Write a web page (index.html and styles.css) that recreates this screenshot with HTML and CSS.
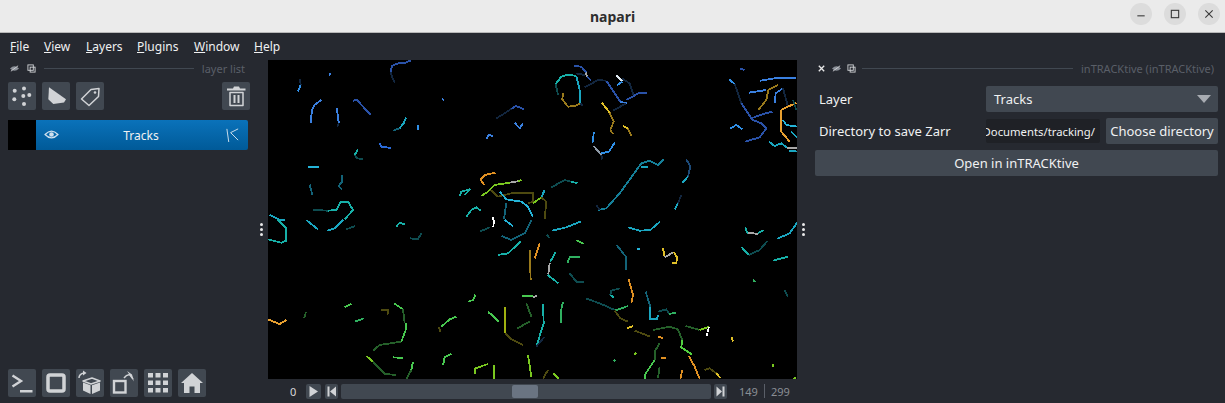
FILE: index.html
```html
<!DOCTYPE html>
<html lang="en">
<head>
<meta charset="utf-8">
<title>napari</title>
<link rel="stylesheet" href="styles.css">
</head>
<body>
<div class="app">
  <header class="titlebar">
    <div class="title">napari</div>
    <div class="winbtns">
      <div class="winbtn"><svg viewBox="0 0 24 24" width="22" height="22"><path class="wi" d="M8 14h8"/></svg></div>
      <div class="winbtn"><svg viewBox="0 0 24 24" width="22" height="22"><rect class="wi" x="8" y="8" width="8" height="8"/></svg></div>
      <div class="winbtn"><svg viewBox="0 0 24 24" width="22" height="22"><path class="wi" d="M8 8l8 8M16 8l-8 8"/></svg></div>
    </div>
  </header>
  <nav class="menubar">
    <span class="mi m1"><u>F</u>ile</span>
    <span class="mi m2"><u>V</u>iew</span>
    <span class="mi m3"><u>L</u>ayers</span>
    <span class="mi m4"><u>P</u>lugins</span>
    <span class="mi m5"><u>W</u>indow</span>
    <span class="mi m6"><u>H</u>elp</span>
  </nav>
  <main class="workspace">
    <aside class="left">
      <div class="dockhead leftdockhead">
        <svg class="mini" viewBox="0 0 10 10"><path class="minif" d="M0 5q5-5 10 0q-5 5-10 0z"/><path class="minil" d="M1 8L9 2"/></svg>
        <svg class="mini" viewBox="0 0 10 10"><rect class="minil" x="1" y="1" width="6" height="6"/><rect class="minil" x="3.500" y="3.500" width="5.500" height="5.500"/></svg>
        <span class="rule"></span>
        <span class="dockname">layer list</span>
      </div>
      <div class="toolrow">
        <div class="btn"><svg viewBox="0 0 28 28"><g class="ic"><circle cx="16" cy="6.500" r="2"/><circle cx="6.700" cy="8.800" r="2"/><circle cx="21.300" cy="13" r="2"/><circle cx="15.300" cy="14" r="2"/><circle cx="6.300" cy="17.300" r="2"/><circle cx="16" cy="22" r="2"/></g></svg></div>
        <div class="btn"><svg viewBox="0 0 28 28"><path class="ic" d="M7 5.300L24 17.300L22 20.600L11.300 22L6.300 17.300z"/></svg></div>
        <div class="btn"><svg viewBox="0 0 28 28"><path class="ico" d="M5.500 17L15 7.500L23 6.500L22.500 14.500L13 23.500z"/><circle class="ic" cx="19" cy="10.500" r="1.300"/></svg></div>
        <div class="grow"></div>
        <div class="btn"><svg viewBox="0 0 28 28"><path class="ic" d="M5 6.500h6l1-2h5l1 2h5.500v2H5z"/><path class="ico" d="M8 10.500h13v13H8z"/><path class="ic" d="M11.500 13h2v8h-2zM15.500 13h2v8h-2z"/></svg></div>
      </div>
      <div class="layerrow">
        <div class="thumb"></div>
        <div class="layerbody">
          <svg class="eye" viewBox="0 0 16 12"><path class="eyeo" d="M1 6q7-7.500 14 0q-7 7.500-14 0z"/><circle class="eyef" cx="8" cy="6" r="2.500"/></svg>
          <span class="layername">Tracks</span>
          <svg class="trk" viewBox="0 0 16 16"><path class="trkl" d="M2 2l2 14M14 2L6 6l8 8"/></svg>
        </div>
      </div>
      <div class="grow"></div>
      <div class="toolrow bottomrow">
        <div class="btn"><svg viewBox="0 0 28 28"><path class="ico2" d="M4.500 6.500L13 12L4.500 17.500"/><path class="ic" d="M12 21h12.500v2.500H12z"/></svg></div>
        <div class="btn"><svg viewBox="0 0 28 28"><rect class="ico3" x="6" y="6" width="16" height="16" rx="2"/></svg></div>
        <div class="btn"><svg viewBox="0 0 28 28"><path class="ico" d="M7 12l9-3 8 3-9 3z"/><path class="ic" d="M7 13.500l7.500 2.800V25L7 21.500zM16 16.300l8-2.800v8L16 25z"/><path class="ico" d="M3 9q0-4 5-5"/><path class="ic" d="M7 1.500l3.500 2.500L7 6.500z"/></svg></div>
        <div class="btn"><svg viewBox="0 0 28 28"><rect class="ico2" x="4" y="12" width="11.500" height="11.500"/><path class="ico" d="M14 9q3-4 6-3l3 4"/><path class="ic" d="M17 2l5 3.500 2 7z"/></svg></div>
        <div class="btn"><svg viewBox="0 0 28 28"><g class="ic"><rect x="4" y="4" width="5" height="4.500"/><rect x="11.500" y="4" width="5" height="4.500"/><rect x="19" y="4" width="5" height="4.500"/><rect x="4" y="11.500" width="5" height="4.500"/><rect x="11.500" y="11.500" width="5" height="4.500"/><rect x="19" y="11.500" width="5" height="4.500"/><rect x="4" y="19" width="5" height="4.500"/><rect x="11.500" y="19" width="5" height="4.500"/><rect x="19" y="19" width="5" height="4.500"/></g></svg></div>
        <div class="btn"><svg viewBox="0 0 28 28"><path class="ic" d="M14 4L25 14h-3v10h-5.500v-6.500h-5V24H6V14H3z"/></svg></div>
      </div>
    </aside>
    <div class="grip"><i></i><i></i><i></i></div>
    <section class="center">
      <svg class="canvas" viewBox="0 0 529 319" width="529" height="319">
        <g transform="scale(.33333)">
          <!-- upper left -->
          <g class="t">
            <polyline class="dk" points="368,35 372,50 380,68"/>
            <polyline class="nv" points="368,35 372,18 390,10 412,8 428,2"/>
            <polyline class="dk" points="96,58 98,75"/>
            <polyline class="b1" points="98,75 90,95"/>
            <polyline class="b2" points="183,47 187,39"/>
            <polyline class="b2" points="128,188 132,150 140,135 160,120"/>
            <polyline class="b2" points="207,145 210,175 213,190"/>
            <polyline class="dk" points="213,190 208,200"/>
            <polyline class="nv" points="255,122 268,120 285,140 308,165"/>
            <polyline class="b2" points="522,118 528,119"/>
            <polyline class="c1" points="414,172 408,188 395,205"/>
            <polyline class="tl2" points="395,205 375,212"/>
            <polyline class="b1" points="450,194 450,210"/>
            <polyline class="b3" points="335,250 340,260 368,264"/>
            <polyline class="c2" points="270,268 260,285"/>
            <polyline class="tl3" points="260,285 268,295 285,298"/>
            <polyline class="c3" points="120,320 152,322"/>
            <polyline class="tl2" points="222,346 222,365 212,378 222,388"/>
            <polyline class="tl2" points="125,374 130,392 132,406"/>
            <polyline class="dk" points="685,175 710,160 730,146"/>
            <polyline class="nv" points="730,146 745,138 768,148"/>
            <polyline class="b2" points="740,188 755,205 765,190"/>
            <polyline class="b2" points="655,238 662,225 675,228"/>
            <polyline class="or" points="682,338 650,345 638,358 648,375"/>
            <polyline class="gn" points="640,408 660,395 680,375 725,368"/>
            <polyline class="gy" points="725,368 750,364"/>
            <polyline class="gn" points="750,364 760,360"/>
            <polyline class="ol" points="668,390 690,410 730,400 795,398 795,425 780,430"/>
            <polyline class="c3" points="695,395 715,418 760,425 780,440 795,470"/>
            <polyline class="tl2" points="715,430 708,478"/>
            <polyline class="c2" points="575,408 580,395 605,388 590,405"/>
            <polyline class="c2" points="595,470 610,450 625,442 638,452"/>
            <polyline class="tl3" points="135,450 180,452"/>
            <polyline class="c2" points="180,452 205,450 218,425 240,425 255,450 230,478"/>
            <polyline class="c1" points="5,465 35,480 50,480"/>
            <polyline class="wh" points="675,472 675,480"/>
          </g>
          <!-- upper right -->
          <g class="t" transform="translate(795,0)">
            <polyline class="nv" points="122,18 145,20 160,38"/>
            <polyline class="gy" points="158,38 162,50"/>
            <polyline class="nv" points="162,50 175,62"/>
            <polyline class="dk" points="128,40 155,45"/>
            <polyline class="c2" points="68,72 85,50 105,44 130,48"/>
            <polyline class="tl3" points="68,72 75,105"/>
            <polyline class="c1" points="130,48 140,90 142,130"/>
            <polyline class="yd" points="90,98 88,118 105,140 125,138 142,130"/>
            <polyline class="dk" points="142,130 150,138"/>
            <polyline class="dk" points="155,82 195,60 220,62"/>
            <polyline class="nv" points="220,62 245,100 262,125"/>
            <polyline class="b2" points="262,125 282,130"/>
            <polyline class="wh2" points="250,45 268,65"/>
            <polyline class="b1" points="268,65 252,76"/>
            <polyline class="dk" points="268,56 290,70 302,108"/>
            <polyline class="nv" points="280,120 320,98 342,98"/>
            <polyline class="dk" points="240,152 280,130"/>
            <polyline class="yl" points="206,128 230,158"/>
            <polyline class="yd" points="230,158 242,185 232,210 240,222"/>
            <polyline class="yl" points="270,198 285,205"/>
            <polyline class="yd" points="285,205 295,228"/>
            <polyline class="b1" points="183,215 178,250"/>
            <polyline class="gy2" points="182,258 205,285"/>
            <polyline class="b1" points="205,280 228,275 246,247"/>
            <polyline class="dk" points="205,285 208,298"/>
            <polyline class="tl1" points="195,450 220,445 260,400 300,345 325,310 350,302 375,315 392,298"/>
            <polyline class="c1" points="325,320 345,322"/>
            <polyline class="nv3" points="460,298 472,320 465,350"/>
            <polyline class="c1" points="465,350 448,368"/>
            <polyline class="dk" points="445,405 435,430"/>
            <polyline class="c1" points="435,430 425,448"/>
            <polyline class="dk" points="190,435 200,450"/>
            <polyline class="tl3" points="55,382 95,360 115,365"/>
            <polyline class="c2" points="115,365 133,370"/>
            <polyline class="c1" points="25,412 35,390"/>
            <polyline class="gn" points="0,430 25,412"/>
            <polyline class="ol" points="25,412 40,425 35,478"/>
            <polyline class="nv" points="620,25 635,30"/>
            <polyline class="b1" points="588,58 605,72"/>
            <polyline class="dk" points="605,72 625,130"/>
            <polyline class="nv" points="625,130 655,175 690,162 718,155"/>
            <polyline class="b2" points="682,62 730,54 790,54"/>
            <polyline class="b2" points="648,98 700,90"/>
            <polyline class="yd" points="676,150 700,120 706,90 735,75"/>
            <polyline class="b2" points="726,128 728,100 750,85"/>
            <polyline class="dk" points="750,85 765,140"/>
            <polyline class="b1" points="592,205 610,195 628,208"/>
            <polyline class="nv" points="636,245 680,232 700,205 685,190 655,178"/>
            <polyline class="or2" points="790,128 745,150 745,215 770,245"/>
            <polyline class="c3" points="750,180 760,195 795,200"/>
            <polyline class="c1" points="708,245 725,258 745,250 765,265"/>
            <polyline class="gy" points="762,265 795,265"/>
            <polyline class="c1" points="768,272 795,275"/>
            <polyline class="c1" points="775,215 795,235"/>
            <polyline class="tl3" points="780,120 790,150"/>
          </g>
          <!-- lower left -->
          <g class="t" transform="translate(0,480)">
            <polyline class="c2" points="30,0 55,25 55,62 40,68 0,58"/>
            <polyline class="c1" points="115,0 150,28"/>
            <polyline class="c1" points="178,32 200,25 225,0"/>
            <polyline class="tl3" points="235,28 262,18"/>
            <polyline class="c2" points="385,20 395,8 412,14"/>
            <polyline class="tl3" points="425,55 450,58 460,40"/>
            <polyline class="tl3" points="635,35 665,22"/>
            <polyline class="wh" points="678,0 676,20"/>
            <polyline class="c3" points="710,0 735,18"/>
            <polyline class="tl2" points="700,48 730,60 770,40 790,0"/>
            <polyline class="c2" points="690,105 720,100 758,65"/>
            <polyline class="yd" points="785,90 788,180"/>
            <polyline class="or2" points="0,298 35,312 55,300"/>
            <polyline class="gd" points="108,295 114,276"/>
            <polyline class="g2" points="230,262 250,252"/>
            <polyline class="ol" points="338,270 362,270 358,285"/>
            <polyline class="g3" points="260,305 288,295"/>
            <polyline class="g2" points="378,250 405,268"/>
            <polyline class="gd" points="405,268 410,310"/>
            <polyline class="g2" points="415,310 415,325 400,365"/>
            <polyline class="gd" points="400,365 335,375 315,392"/>
            <polyline class="gn" points="295,408 315,425"/>
            <polyline class="gd" points="315,425 350,462 385,465"/>
            <polyline class="g2" points="375,412 405,414"/>
            <polyline class="g2" points="435,425 430,450"/>
            <polyline class="gd" points="430,450 415,478"/>
            <polyline class="g2" points="600,245 615,240 622,224"/>
            <polyline class="g2" points="520,320 545,298 565,290"/>
            <polyline class="ol" points="512,322 518,336"/>
            <polyline class="g2" points="660,276 672,285 692,305"/>
            <polyline class="gd" points="748,325 785,305"/>
            <polyline class="g2" points="762,228 795,228"/>
            <polyline class="gd" points="775,250 790,290"/>
            <polyline class="yg" points="711,262 711,340"/>
            <polyline class="ol" points="711,340 730,358 765,375"/>
            <polyline class="g2" points="525,436 530,412 550,402"/>
            <polyline class="gn" points="620,462 622,445 660,432"/>
            <polyline class="gn" points="678,436 678,478"/>
            <polyline class="gn" points="780,404 790,470"/>
          </g>
          <!-- lower right -->
          <g class="t" transform="translate(795,480)">
            <polyline class="c1" points="58,32 100,22 145,4"/>
            <polyline class="c1" points="285,22 320,32 352,30 382,4"/>
            <polyline class="tl3" points="42,44 50,55"/>
            <polyline class="or" points="20,70 5,115"/>
            <polyline class="g2" points="130,60 152,72"/>
            <polyline class="tl2" points="250,74 280,112 278,150"/>
            <polyline class="c3" points="312,88 322,86"/>
            <polyline class="yl" points="390,85 395,110"/>
            <polyline class="gy" points="395,112 422,96"/>
            <polyline class="yl" points="422,96 432,112 430,128 418,130"/>
            <polyline class="c2" points="68,96 52,125"/>
            <polyline class="gy" points="50,130 46,162"/>
            <polyline class="c2" points="44,165 76,190"/>
            <polyline class="g3" points="104,128 110,112 142,112"/>
            <polyline class="tl3" points="110,160 130,185 152,186"/>
            <polyline class="c2" points="636,22 645,42"/>
            <polyline class="gy" points="645,38 675,42"/>
            <polyline class="c2" points="675,40 692,30"/>
            <polyline class="c1" points="733,56 770,40 795,4"/>
            <polyline class="c2" points="626,82 648,105"/>
            <polyline class="tl3" points="648,105 680,90 704,62"/>
            <polyline class="c2" points="720,122 765,110"/>
            <polyline class="g3" points="660,180 668,186"/>
            <polyline class="tl3" points="755,210 765,230"/>
            <polyline class="or" points="287,178 300,225 295,248"/>
            <polyline class="tl3" points="260,205 235,212 232,225"/>
            <polyline class="c2" points="232,225 242,232"/>
            <polyline class="c2" points="30,252 32,310 10,380"/>
            <polyline class="dk" points="10,380 35,350"/>
            <polyline class="gy" points="0,232 12,226"/>
            <polyline class="g3" points="90,245 84,272 85,310"/>
            <polyline class="tl3" points="158,235 200,250 245,270"/>
            <polyline class="g3" points="245,272 285,258"/>
            <polyline class="ol" points="245,272 262,295 285,305"/>
            <polyline class="yl" points="282,325 300,318"/>
            <polyline class="tl2" points="338,215 352,260"/>
            <polyline class="c1" points="352,260 352,298 372,298 375,285"/>
            <polyline class="tl3" points="375,275 400,268 408,282"/>
            <polyline class="g3" points="408,282 430,278"/>
            <polyline class="ol" points="305,332 352,350"/>
            <polyline class="or" points="376,350 390,354"/>
            <polyline class="gd" points="360,330 410,320 435,328 448,360"/>
            <polyline class="gn2" points="448,360 445,382 478,404"/>
            <polyline class="gd" points="458,318 500,330"/>
            <polyline class="gn" points="500,330 528,320"/>
            <polyline class="wh" points="528,320 524,335"/>
            <polyline class="wh" points="522,340 522,348"/>
            <polyline class="yl" points="595,350 600,365"/>
            <polyline class="or" points="384,414 398,414"/>
            <polyline class="gn" points="305,404 310,398"/>
            <polyline class="g3" points="242,424 246,420"/>
            <polyline class="gd" points="380,370 365,395 365,420"/>
            <polyline class="g2" points="365,420 335,465 335,478"/>
            <polyline class="gd" points="380,440 375,475"/>
            <polyline class="or" points="468,408 485,440 500,476"/>
            <polyline class="or" points="448,450 442,476"/>
            <polyline class="gn" points="720,432 720,442"/>
            <polyline class="ol" points="515,450 530,445 550,460"/>
            <polyline class="yl" points="550,460 562,474"/>
            <polyline class="ol" points="30,476 45,450"/>
            <polyline class="gn" points="62,460 78,478"/>
            <polyline class="gn" points="788,472 782,478"/>
          </g>
        </g>
      </svg>
      <div class="slider">
        <span class="frame">0</span>
        <div class="sbtn sbtn1"><svg viewBox="0 0 15 15"><path class="ic" d="M3.500 2L12 7.500L3.500 13z"/></svg></div>
        <div class="sbtn sbtn2"><svg viewBox="0 0 13 15"><path class="ic" d="M2.500 2.500h2v10h-2zM11 2.500v10L5 7.500z"/></svg></div>
        <div class="track"><div class="handle"></div></div>
        <div class="sbtn sbtn3"><svg viewBox="0 0 13 15"><path class="ic" d="M2.500 2.500v10L8 7.500zM8.500 2.500h2v10h-2z"/></svg></div>
        <span class="cur">149</span>
        <span class="sep"></span>
        <span class="tot">299</span>
      </div>
    </section>
    <div class="grip"><i></i><i></i><i></i></div>
    <aside class="right">
      <div class="dockhead righthead">
        <svg class="mini" viewBox="0 0 10 10"><path class="minix" d="M2 2l6 6M8 2l-6 6"/></svg>
        <svg class="mini" viewBox="0 0 10 10"><path class="minif" d="M0 5q5-5 10 0q-5 5-10 0z"/><path class="minil" d="M1 8L9 2"/></svg>
        <svg class="mini" viewBox="0 0 10 10"><rect class="minil" x="1" y="1" width="6" height="6"/><rect class="minil" x="3.500" y="3.500" width="5.500" height="5.500"/></svg>
        <span class="rule"></span>
        <span class="dockname">inTRACKtive (inTRACKtive)</span>
      </div>
      <div class="formrow row1">
        <span class="lbl">Layer</span>
        <div class="combo"><span>Tracks</span><span class="tri"></span></div>
      </div>
      <div class="formrow row2">
        <span class="lbl">Directory to save Zarr</span>
        <div class="dirfield"><div class="dirinput"><span>Documents/tracking/</span></div><div class="pbtn choose">Choose directory</div></div>
      </div>
      <div class="pbtn open">Open in inTRACKtive</div>
    </aside>
  </main>
</div>
</body>
</html>
```
FILE: styles.css
```css
* { box-sizing: border-box; }
html, body { margin: 0; padding: 0; width: 1225px; height: 403px; overflow: hidden; }
body { font-family: "Noto Sans", sans-serif; font-size: 13px; color: #f0f1f2; background: #262930; }
.app { display: flex; flex-direction: column; width: 1225px; height: 403px; }

.titlebar { flex: 0 0 33px; display: flex; align-items: center; justify-content: center; position: relative; background: #ebebeb; border-bottom: 1px solid #b8b8b8; }
.title { font-family: "Noto Sans", sans-serif; font-weight: 700; font-size: 14px; color: #2e2e2e; }
.winbtns { position: absolute; right: 5px; top: 3px; display: flex; gap: 12px; }
.winbtn { width: 22px; height: 22px; border-radius: 50%; background: #dcdcdc; }
.winbtn svg { display: block; }
.wi { fill: none; stroke: #3a3a3a; stroke-width: 1.200; }

.menubar { flex: 0 0 27px; display: flex; align-items: center; padding-left: 10px; font-size: 12px; color: #f0f1f2; }
.mi { display: block; }
.m1 { width: 34px; } .m2 { width: 42px; } .m3 { width: 51px; } .m4 { width: 57px; } .m5 { width: 60px; }

.workspace { flex: 1; display: flex; min-height: 0; }
.left { flex: 0 0 255px; display: flex; flex-direction: column; padding: 0 5px 6px 8px; }
.grow { flex: 1; }
.dockhead { display: flex; align-items: center; height: 16px; font-size: 11px; color: #5a5f68; }
.leftdockhead { padding-left: 2px; padding-right: 5px; }
.mini { width: 9px; height: 9px; margin-right: 8px; flex: none; }
.minif { fill: #8b9098; }
.minil { fill: none; stroke: #d1d3d6; stroke-width: 1; }
.minix { fill: none; stroke: #e8e8e8; stroke-width: 1.500; }
.rule { flex: 1; height: 1px; background: #414851; margin: 0 8px 0 0; }
.dockname { white-space: nowrap; }

.toolrow { display: flex; gap: 6px; margin-top: 6px; }
.btn { width: 28px; height: 28px; background: #414851; border-radius: 2px; flex: none; }
.btn svg { display: block; width: 28px; height: 28px; }
.ic { fill: #d1d3d6; }
.ico { fill: none; stroke: #d1d3d6; stroke-width: 1.500; stroke-linejoin: round; }
.ico2 { fill: none; stroke: #d1d3d6; stroke-width: 2.400; }
.ico3 { fill: none; stroke: #d1d3d6; stroke-width: 3.500; }

.layerrow { display: flex; height: 30px; margin-top: 10px; width: 240px; }
.thumb { width: 28px; background: #000; }
.layerbody { flex: 1; display: flex; align-items: center; justify-content: center; position: relative; background: linear-gradient(#0a72ba, #005a98); border-radius: 0 2px 2px 0; font-size: 12px; }
.layername { margin-right: 2px; }
.eye { position: absolute; left: 8px; top: 9px; width: 15px; height: 11px; }
.eyeo { fill: none; stroke: #cfe0ee; stroke-width: 1.400; }
.eyef { fill: #cfe0ee; }
.trk { position: absolute; right: 8px; top: 7px; width: 15px; height: 15px; }
.trkl { fill: none; stroke: #d5e3ee; stroke-width: 1; }
.bottomrow { margin-top: 0; }

.grip { flex: 0 0 13px; display: flex; flex-direction: column; align-items: center; gap: 2px; padding-top: 163px; }
.grip i { display: block; width: 3px; height: 3px; border-radius: 50%; background: #e8e8e8; }

.center { flex: 0 0 529px; display: flex; flex-direction: column; }
.canvas { display: block; flex: none; background: #000; }
.t polyline { fill: none; stroke-width: 5.500; shape-rendering: crispEdges; stroke-linejoin: round; }
.dk { stroke: #12263f; } .nv { stroke: #2a52a8; } .nv3 { stroke: #1c4a78; }
.b1 { stroke: #3090e8; } .b2 { stroke: #3a80e0; } .b3 { stroke: #2a6ad8; }
.c1 { stroke: #1aa6c0; } .c2 { stroke: #17b0a8; } .c3 { stroke: #25b4d8; }
.tl1 { stroke: #157f98; } .tl2 { stroke: #136378; } .tl3 { stroke: #0e4c50; }
.or { stroke: #e09022; } .or2 { stroke: #e8a030; } .yl { stroke: #e0c028; } .yd { stroke: #9a7a1c; }
.ol { stroke: #4e4a10; } .gy { stroke: #a8a8a8; } .gy2 { stroke: #8f9aa8; }
.wh { stroke: #fff; } .wh2 { stroke: #dfe8f0; }
.gn { stroke: #7ac820; } .gn2 { stroke: #52d040; } .g2 { stroke: #48c850; } .g3 { stroke: #30b060; } .gd { stroke: #25602a; } .yg { stroke: #a0b010; }

.slider { flex: 1; display: flex; align-items: center; font-size: 11px; color: #d8d9db; }
.frame { width: 38px; padding-left: 22px; flex: none; }
.sbtn { flex: none; height: 15px; background: #414851; border-radius: 2px; }
.sbtn svg { display: block; width: 100%; height: 100%; }
.sbtn1 { width: 15px; }
.sbtn2 { width: 13px; margin-left: 4px; }
.sbtn3 { width: 13px; margin-left: 3px; }
.track { flex: none; width: 370px; height: 15px; margin-left: 3px; background: #414851; border-radius: 2px; display: flex; align-items: center; padding-left: 171px; }
.handle { width: 26px; height: 13px; background: #6a7482; border-radius: 2px; }
.cur { margin-left: 12px; color: #8a8e95; }
.sep { width: 1px; height: 14px; background: #5a5f68; margin: 0 6px; }
.tot { color: #8a8e95; }

.right { flex: 1; display: flex; flex-direction: column; padding-right: 7px; padding-left: 5px; min-width: 0; }
.righthead { padding-left: 2px; padding-right: 4px; }
.righthead .mini { margin-right: 6px; }
.formrow { display: flex; align-items: center; padding-left: 4px; }
.row1 { height: 26px; margin-top: 10px; }
.row2 { height: 26px; margin-top: 6px; }
.lbl { width: 167px; flex: none; }
.combo { flex: 1; height: 26px; background: #414851; border-radius: 2px; display: flex; align-items: center; justify-content: space-between; padding: 0 7px 0 8px; }
.tri { width: 0; height: 0; border-left: 7px solid transparent; border-right: 7px solid transparent; border-top: 8px solid #a8acb2; }
.dirfield { flex: 1; display: flex; align-items: center; gap: 6px; }
.dirinput { width: 114px; height: 24px; background: #1f2126; border-radius: 2px; overflow: hidden; display: flex; align-items: center; justify-content: flex-end; font-size: 11.300px; padding-right: 5px; white-space: nowrap; }
.pbtn { background: #414851; border-radius: 2px; display: flex; align-items: center; justify-content: center; white-space: nowrap; }
.choose { flex: 1; height: 26px; }
.open { height: 26px; margin-top: 6px; }
```
